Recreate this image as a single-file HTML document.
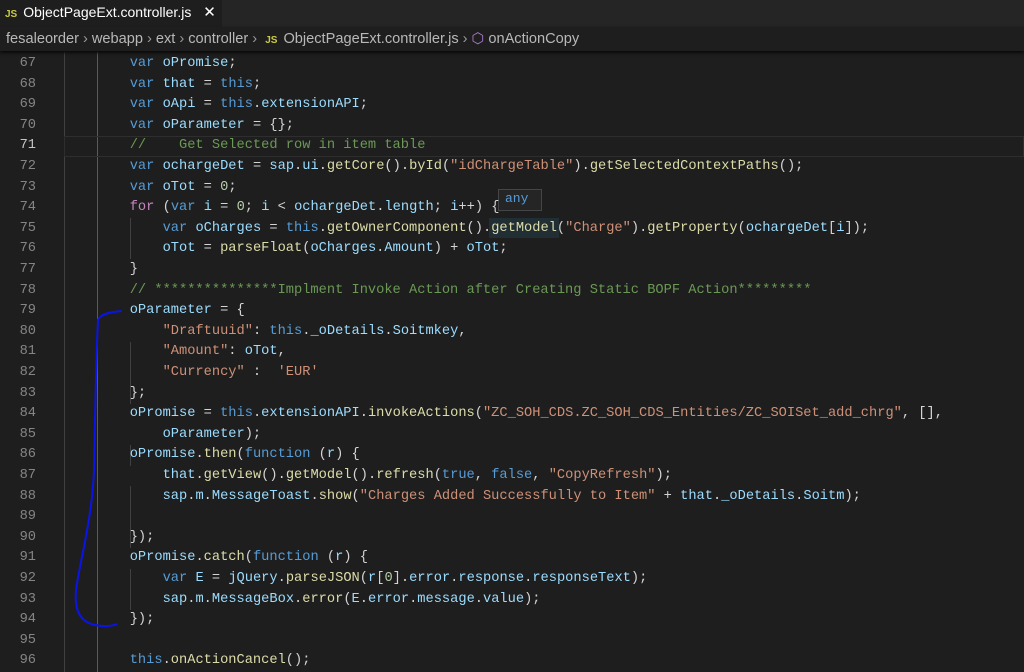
<!DOCTYPE html>
<html><head><meta charset="utf-8"><style>
*{margin:0;padding:0;box-sizing:border-box}
body{width:1024px;height:668px;background:#1e1e1e;overflow:hidden;position:relative;font-family:"Liberation Sans",sans-serif}
.tabbar{position:absolute;left:0;top:0;width:1024px;height:27px;background:#252526}
.tab{position:absolute;left:0;top:0;width:222px;height:27px;background:#1e1e1e;color:#fff;font-size:14px;line-height:24px;padding-left:5px}
.js{color:#cbcb41;font-weight:bold;font-size:10px;margin-right:6px}
.crumb{position:absolute;left:0;top:27px;width:1024px;height:24px;background:#1e1e1e;color:#b8b8b8;font-size:14.6px;line-height:24px;padding-left:6px;box-shadow:0 2px 3px #0a0a0a;z-index:2}
.crumb .s{color:#9a9a9a;margin:0 4px}
.ed{position:absolute;left:0;top:54px;width:1024px}
.ln{position:absolute;left:0;width:36px;text-align:right;color:#858585}
.row{position:absolute;left:0;width:1024px;height:20.6px;font-family:"Liberation Mono",monospace;font-size:13.7px;line-height:20.6px;white-space:pre}
.code{position:absolute;left:64px;color:#d4d4d4}
.k{color:#569cd6}.v{color:#9cdcfe}.f{color:#dcdcaa}.s{color:#ce9178}.c{color:#6a9955}.p{color:#c586c0}.n{color:#b5cea8}
.g{position:absolute;width:1px;background:#404040}
</style></head><body>
<div class="tabbar"><div class="tab"><span class="js">JS</span>ObjectPageExt.controller.js <span style="margin-left:8px;font-size:15px">✕</span></div></div>
<div class="crumb">fesaleorder<span class="s">›</span>webapp<span class="s">›</span>ext<span class="s">›</span>controller<span class="s">›</span> <span class="js">JS</span>ObjectPageExt.controller.js<span class="s">›</span><span style="color:#b180d7">⬡</span> onActionCopy</div>
<div class="ed">
<div class="g" style="left:64px;top:-2px;height:620px"></div>
<div class="g" style="left:97px;top:-2px;height:620px;background:#5a5a5a"></div>
<div class="g" style="left:130px;top:164px;height:41px"></div>
<div class="g" style="left:130px;top:288px;height:62px"></div>
<div class="g" style="left:130px;top:391px;height:21px"></div>
<div class="g" style="left:130px;top:432px;height:62px"></div>
<div class="g" style="left:130px;top:515px;height:41px"></div>
<div style="position:absolute;left:64px;top:82px;width:960px;height:21px;border:1px solid #2e2e2e"></div>
<div style="position:absolute;left:498px;top:135px;width:44px;height:22px;background:#252526;border:1px solid #454545;color:#569cd6;font-family:'Liberation Mono',monospace;font-size:13px;padding-left:6px;line-height:18px">any</div>
<div style="position:absolute;left:489px;top:164px;width:70px;height:20px;background:#264f5f55"></div>
</div>
<div class="ed" id="e"></div>
<svg style="position:absolute;left:0;top:0" width="1024" height="668"><path d="M122 311 C110 312 100 314 98 320 C96 360 95 420 94 470 C92 520 80 560 76 590 C74 610 80 622 95 625 C105 627 112 626 117 624" fill="none" stroke="#0a14e8" stroke-width="2"/></svg>
<script>
const L=[
'        <k>var</k> <v>oPromise</v>;',
'        <k>var</k> <v>that</v> = <k>this</k>;',
'        <k>var</k> <v>oApi</v> = <k>this</k>.<v>extensionAPI</v>;',
'        <k>var</k> <v>oParameter</v> = {};',
'        <c>//    Get Selected row in item table</c>',
'        <k>var</k> <v>ochargeDet</v> = <v>sap</v>.<v>ui</v>.<f>getCore</f>().<f>byId</f>(<s>"idChargeTable"</s>).<f>getSelectedContextPaths</f>();',
'        <k>var</k> <v>oTot</v> = <n>0</n>;',
'        <p>for</p> (<k>var</k> <v>i</v> = <n>0</n>; <v>i</v> &lt; <v>ochargeDet</v>.<v>length</v>; <v>i</v>++) {',
'            <k>var</k> <v>oCharges</v> = <k>this</k>.<f>getOwnerComponent</f>().<f>getModel</f>(<s>"Charge"</s>).<f>getProperty</f>(<v>ochargeDet</v>[<v>i</v>]);',
'            <v>oTot</v> = <f>parseFloat</f>(<v>oCharges</v>.<v>Amount</v>) + <v>oTot</v>;',
'        }',
'        <c>// ***************Implment Invoke Action after Creating Static BOPF Action*********</c>',
'        <v>oParameter</v> = {',
'            <s>"Draftuuid"</s>: <k>this</k>.<v>_oDetails</v>.<v>Soitmkey</v>,',
'            <s>"Amount"</s>: <v>oTot</v>,',
'            <s>"Currency"</s> :  <s>\'EUR\'</s>',
'        };',
'        <v>oPromise</v> = <k>this</k>.<v>extensionAPI</v>.<f>invokeActions</f>(<s>"ZC_SOH_CDS.ZC_SOH_CDS_Entities/ZC_SOISet_add_chrg"</s>, [],',
'            <v>oParameter</v>);',
'        <v>oPromise</v>.<f>then</f>(<k>function</k> (<v>r</v>) {',
'            <v>that</v>.<f>getView</f>().<f>getModel</f>().<f>refresh</f>(<k>true</k>, <k>false</k>, <s>"CopyRefresh"</s>);',
'            <v>sap</v>.<v>m</v>.<v>MessageToast</v>.<f>show</f>(<s>"Charges Added Successfully to Item"</s> + <v>that</v>.<v>_oDetails</v>.<v>Soitm</v>);',
'',
'        });',
'        <v>oPromise</v>.<f>catch</f>(<k>function</k> (<v>r</v>) {',
'            <k>var</k> <v>E</v> = <v>jQuery</v>.<f>parseJSON</f>(<v>r</v>[<n>0</n>].<v>error</v>.<v>response</v>.<v>responseText</v>);',
'            <v>sap</v>.<v>m</v>.<v>MessageBox</v>.<f>error</f>(<v>E</v>.<v>error</v>.<v>message</v>.<v>value</v>);',
'        });',
'',
'        <k>this</k>.<f>onActionCancel</f>();'];
let h='';
L.forEach((t,i)=>{
 t=t.replace(/<(k|v|f|s|c|p|n)>/g,'<span class="$1">').replace(/<\/(k|v|f|s|c|p|n)>/g,'</span>');
 const num=67+i;
 h+=`<div class="row" style="top:${i*20.6}px"><span class="ln" style="${num==71?'color:#c6c6c6':''}">${num}</span><span class="code">${t}</span></div>`;
});
document.getElementById('e').innerHTML=h;
</script>
</body></html>
